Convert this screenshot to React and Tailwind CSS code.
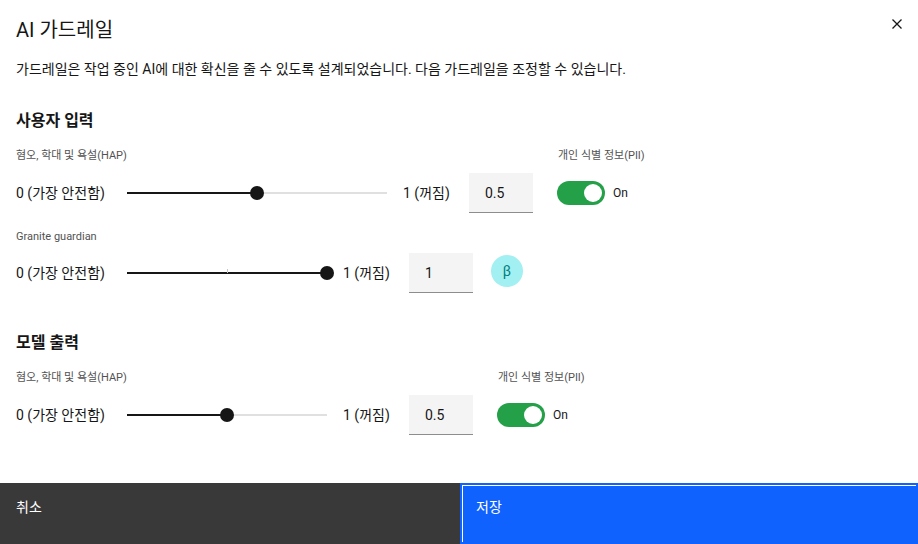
import React from 'react'

const Slider = ({ width, fill }) => {
  return (
    <div className={`relative h-4 flex items-center ${width}`}>
      <div className="w-full h-0.5 bg-[#e0e0e0]"></div>
      <div className={`absolute left-0 h-0.5 bg-[#161616] ${fill}`}></div>
    </div>
  )
}

const Thumb = ({ className }) => (
  <div className={`absolute top-[1px] w-3.5 h-3.5 rounded-full bg-[#161616] ${className}`}></div>
)

const NumberBox = ({ value }) => (
  <div className="w-16 h-10 bg-[#f4f4f4] border-b border-[#8d8d8d] pl-4 flex items-center text-sm text-[#161616]">
    {value}
  </div>
)

const Toggle = () => (
  <div className="flex flex-col">
    <span className="text-[11px] leading-4 text-[#525252] ml-px">개인 식별 정보(PII)</span>
    <div className="flex items-center gap-2 mt-[17px]">
      <div className="w-12 h-6 rounded-full bg-[#24a148] relative">
        <div className="absolute right-[3px] top-[3px] w-[18px] h-[18px] rounded-full bg-white"></div>
      </div>
      <span className="text-xs text-[#161616]">On</span>
    </div>
  </div>
)

const SliderRow = ({ width, fill, thumb, value, tick }) => (
  <div className="flex items-center gap-4 h-10">
    <span className="text-sm text-[#161616] w-[95px] whitespace-nowrap">0 (가장 안전함)</span>
    <div className="relative">
      <Slider width={width} fill={fill} />
      <Thumb className={thumb} />
      {tick && <div className="absolute left-[100px] top-[4px] w-px h-1 bg-[#c6c6c6]"></div>}
    </div>
    <span className="text-sm text-[#161616] w-[50px] whitespace-nowrap">1 (꺼짐)</span>
    <NumberBox value={value} />
  </div>
)

const App = () => {
  return (
    <div className="w-[918px] h-[544px] bg-white flex flex-col overflow-hidden font-['Roboto','Noto_Sans_CJK_KR',sans-serif]">
      <div className="flex-1 px-4 relative">
        <h2 className="text-xl leading-7 text-[#161616] pt-4 h-[46px] box-content-none">AI 가드레일</h2>
        <button className="absolute right-[15px] top-[18px] w-3 h-3 text-[#161616]">
          <svg viewBox="0 0 12 12" width="12" height="12" fill="none" stroke="currentColor" strokeWidth="1.3">
            <path d="M1.5 1.5L10.5 10.5M10.5 1.5L1.5 10.5" />
          </svg>
        </button>
        <p className="text-sm leading-5 text-[#161616] mt-[13px]">
          가드레일은 작업 중인 AI에 대한 확신을 줄 수 있도록 설계되었습니다. 다음 가드레일을 조정할 수 있습니다.
        </p>

        <h3 className="text-base leading-6 font-semibold text-[#161616] mt-[30px]">사용자 입력</h3>
        <div className="flex gap-6 mt-[15px]">
          <div>
            <div className="text-[11px] leading-4 text-[#525252] mb-[9px]">혐오, 학대 및 욕설(HAP)</div>
            <SliderRow width="w-[260px]" fill="w-[130px]" thumb="left-[123px]" value="0.5" />
          </div>
          <Toggle />
        </div>

        <div className="mt-4">
          <div className="text-[11px] leading-4 text-[#525252] mb-2">Granite guardian</div>
          <div className="flex items-center gap-[18px]">
            <SliderRow width="w-[200px]" fill="w-[200px]" thumb="left-[193px]" value="1" tick />
            <div className="w-8 h-8 rounded-full bg-[#a2f0f1] flex items-center justify-center text-sm text-[#007d79] -mt-1">β</div>
          </div>
        </div>

        <h3 className="text-base leading-6 font-semibold text-[#161616] mt-[38px]">모델 출력</h3>
        <div className="flex gap-6 mt-[15px]">
          <div>
            <div className="text-[11px] leading-4 text-[#525252] mb-[9px]">혐오, 학대 및 욕설(HAP)</div>
            <SliderRow width="w-[200px]" fill="w-[100px]" thumb="left-[93px]" value="0.5" />
          </div>
          <Toggle />
        </div>
      </div>

      <div className="h-[61px] flex">
        <div className="w-[460px] bg-[#393939] text-white text-sm px-4 pt-3.5">취소</div>
        <div className="flex-1 bg-[#0f62fe] border-2 border-[#0f62fe] shadow-[inset_1px_1px_0_0_#fff] text-white text-sm pl-3.5 pt-3">저장</div>
      </div>
    </div>
  )
}

export default App
